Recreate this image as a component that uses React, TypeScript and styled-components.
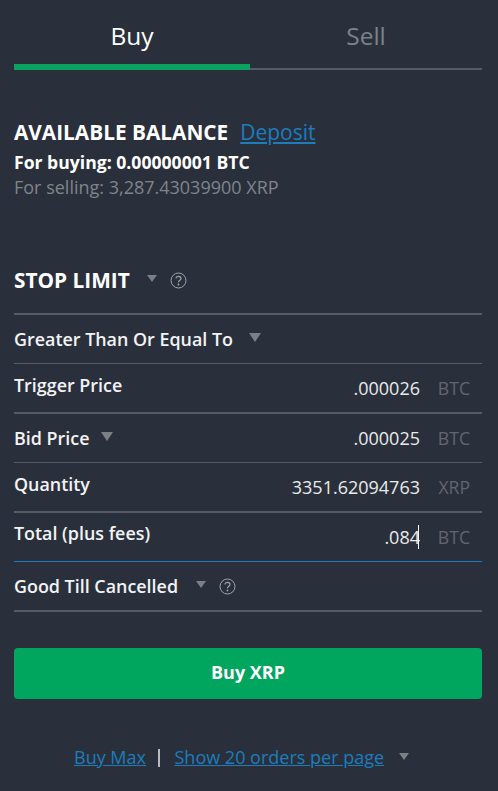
import React from "react";
import styled, { createGlobalStyle } from "styled-components";

const Global = createGlobalStyle`
  html, body { margin: 0; padding: 0; background: #2a303b; }
  body { font-family: "Open Sans", "Liberation Sans", sans-serif; color: #fff; }
`;

const Page = styled.div`
  width: 498px;
  height: 791px;
  box-sizing: border-box;
  padding: 0 16px 0 14px;
  overflow: hidden;
  background: #2a303b;
`;

const Tabs = styled.div`
  display: grid;
  grid-template-columns: 236px 232px;
  height: 70px;
`;

const Tab = styled.div<{ $active?: boolean }>`
  box-sizing: border-box;
  display: flex;
  justify-content: center;
  padding-top: 19px;
  height: 70px;
  font-size: 24.5px;
  line-height: 33px;
  color: ${(p) => (p.$active ? "#fff" : "#7d828b")};
  border-bottom: ${(p) => (p.$active ? "6px solid #0ba360" : "2px solid #575b65")};
`;

const Balance = styled.section`
  padding-top: 48px;
  height: 194px;
  box-sizing: border-box;
`;

const BalanceHead = styled.div`
  display: flex;
  align-items: baseline;
  gap: 12px;
  line-height: 28px;
  margin-bottom: 4px;
`;

const Heading = styled.span`
  font-size: 20.8px;
  font-weight: 700;
  color: #fff;
`;

const Link = styled.a<{ $size?: number }>`
  color: #1d7cbc;
  text-decoration: underline;
  font-size: ${(p) => p.$size ?? 21}px;
`;

const BalanceLine = styled.div<{ $muted?: boolean }>`
  font-size: ${(p) => (p.$muted ? 18 : 17.6)}px;
  line-height: 24px;
  margin-top: ${(p) => (p.$muted ? 1 : 0)}px;
  font-weight: ${(p) => (p.$muted ? 400 : 700)};
  color: ${(p) => (p.$muted ? "#7f848c" : "#fff")};
`;

const TypeHead = styled.div`
  display: flex;
  align-items: center;
  box-sizing: border-box;
  padding-bottom: 16px;
  height: 50.5px;
  border-bottom: 2px solid #575b65;
`;

const Row = styled.div<{ $thin?: boolean; $focus?: boolean }>`
  height: 49.6px;
  box-sizing: border-box;
  display: flex;
  align-items: center;
  justify-content: space-between;
  border-bottom: ${(p) => (p.$thin ? 1 : 2)}px solid ${(p) => (p.$focus ? "#1d7cbc" : "#575b65")};
`;

const Label = styled.div<{ $raise?: number }>`
  display: flex;
  align-items: center;
  font-size: 17.9px;
  font-weight: 600;
  line-height: 24px;
  color: #f2f3f5;
  margin-top: ${(p) => -2 * (p.$raise ?? 0)}px;
`;

const Value = styled.div`
  display: flex;
  align-items: baseline;
  font-size: 18px;
  line-height: 24px;
  color: #e9eaec;
  padding-right: 12px;
`;

const Amount = styled.span<{ $caret?: boolean }>`
  position: relative;
  &::after {
    content: "";
    display: ${(p) => (p.$caret ? "block" : "none")};
    position: absolute;
    right: 1px;
    top: 0;
    width: 1px;
    height: 24px;
    background: #fff;
  }
`;

const Unit = styled.span`
  width: 50px;
  text-align: right;
  color: #62666f;
  font-size: 17.6px;
`;

const Arrow = styled.span<{ $ml: number; $big?: boolean }>`
  display: inline-block;
  width: 0;
  height: 0;
  margin-left: ${(p) => p.$ml}px;
  margin-top: -3px;
  border-left: ${(p) => (p.$big ? 6 : 5)}px solid transparent;
  border-right: ${(p) => (p.$big ? 6 : 5)}px solid transparent;
  border-top: ${(p) => (p.$big ? 9 : 7)}px solid #7c7f85;
`;

const HelpIcon = styled.svg`
  margin-left: 13px;
  width: 17px;
  height: 17px;
  flex: none;
`;

const Help = () => (
  <HelpIcon viewBox="0 0 17 17" fill="none">
    <circle cx="8.5" cy="8.5" r="7.5" stroke="#a0a3a9" strokeWidth="1" />
    <path d="M6 6.6c0-1.5 1.1-2.3 2.5-2.3s2.5.9 2.5 2.1c0 1.9-2.5 1.8-2.5 3.8" stroke="#a0a3a9" strokeWidth="1.2" fill="none" />
    <circle cx="8.5" cy="12.5" r=".9" fill="#a0a3a9" />
  </HelpIcon>
);

const SubmitButton = styled.button`
  display: block;
  width: 100%;
  height: 51px;
  margin-top: 36px;
  border: 0;
  border-radius: 4px;
  background: #00a65e;
  color: #fff;
  font-family: inherit;
  font-size: 18px;
  font-weight: 700;
  padding: 0 0 4px;
`;

const Footer = styled.div`
  margin-top: 45px;
  display: flex;
  align-items: center;
  padding-left: 60px;
  line-height: 27px;
`;

const Sep = styled.span`
  width: 2px;
  height: 18px;
  background: #b8bbc2;
  margin: 0 14.5px 0 12px;
`;

export default function App() {
  return (
    <Page>
      <Global />
      <Tabs>
        <Tab $active>Buy</Tab>
        <Tab>Sell</Tab>
      </Tabs>
      <Balance>
        <BalanceHead>
          <Heading>AVAILABLE BALANCE</Heading>
          <Link>Deposit</Link>
        </BalanceHead>
        <BalanceLine>For buying: 0.00000001 BTC</BalanceLine>
        <BalanceLine $muted>For selling: 3,287.43039900 XRP</BalanceLine>
      </Balance>
      <TypeHead>
        <Heading>STOP LIMIT</Heading>
        <Arrow $ml={17} />
        <Help />
      </TypeHead>
      <Row $thin>
        <Label>
          Greater Than Or Equal To
          <Arrow $ml={16} $big />
        </Label>
      </Row>
      <Row>
        <Label $raise={3}>Trigger Price</Label>
        <Value>
          <Amount>.000026</Amount>
          <Unit>BTC</Unit>
        </Value>
      </Row>
      <Row $thin>
        <Label>
          Bid Price
          <Arrow $ml={12} $big />
        </Label>
        <Value>
          <Amount>.000025</Amount>
          <Unit>BTC</Unit>
        </Value>
      </Row>
      <Row>
        <Label $raise={3}>Quantity</Label>
        <Value>
          <Amount>3351.62094763</Amount>
          <Unit>XRP</Unit>
        </Value>
      </Row>
      <Row $thin $focus>
        <Label $raise={4}>Total (plus fees)</Label>
        <Value>
          <Amount $caret>.084</Amount>
          <Unit>BTC</Unit>
        </Value>
      </Row>
      <Row>
        <Label>
          Good Till Cancelled
          <Arrow $ml={18} />
          <Help />
        </Label>
      </Row>
      <SubmitButton>Buy XRP</SubmitButton>
      <Footer>
        <Link $size={18}>Buy Max</Link>
        <Sep />
        <Link $size={18}>Show 20 orders per page</Link>
        <Arrow $ml={15} />
      </Footer>
    </Page>
  );
}
